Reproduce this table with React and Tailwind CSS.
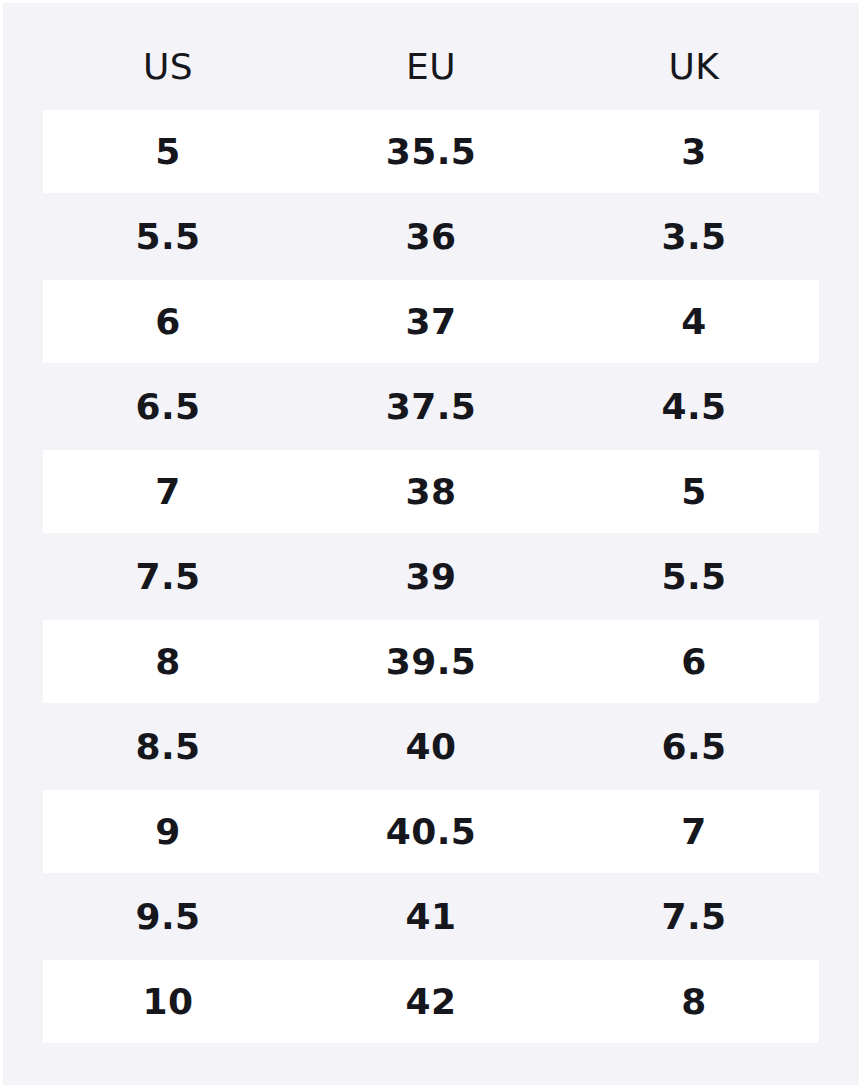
const sizes = [
  ["5", "35.5", "3"],
  ["5.5", "36", "3.5"],
  ["6", "37", "4"],
  ["6.5", "37.5", "4.5"],
  ["7", "38", "5"],
  ["7.5", "39", "5.5"],
  ["8", "39.5", "6"],
  ["8.5", "40", "6.5"],
  ["9", "40.5", "7"],
  ["9.5", "41", "7.5"],
  ["10", "42", "8"],
];

export default function App() {
  return (
    <div className="bg-white p-[3px] w-[862px] min-h-[1088px] font-['DejaVu_Sans',sans-serif] text-[#16161d]">
      <div className="bg-[#f3f3f8] px-[40px] pt-[31px] pb-[42px]">
        {/* header */}
        <div className="grid grid-cols-[250px_276px_250px] h-[66px] items-center text-center text-[36px] tracking-[0.4px] mb-[10px]">
          <div>US</div>
          <div>EU</div>
          <div>UK</div>
        </div>

        <div className="flex flex-col gap-[2px]">
          {sizes.map((row, i) => (
            <div
              key={i}
              className={
                "grid grid-cols-[250px_276px_250px] h-[83px] items-center text-center text-[36px] font-bold tracking-[0.4px] " +
                (i % 2 === 0 ? "bg-white" : "")
              }
            >
              {row.map((v, j) => (
                <div key={j}>{v}</div>
              ))}
            </div>
          ))}
        </div>
      </div>
    </div>
  );
}
